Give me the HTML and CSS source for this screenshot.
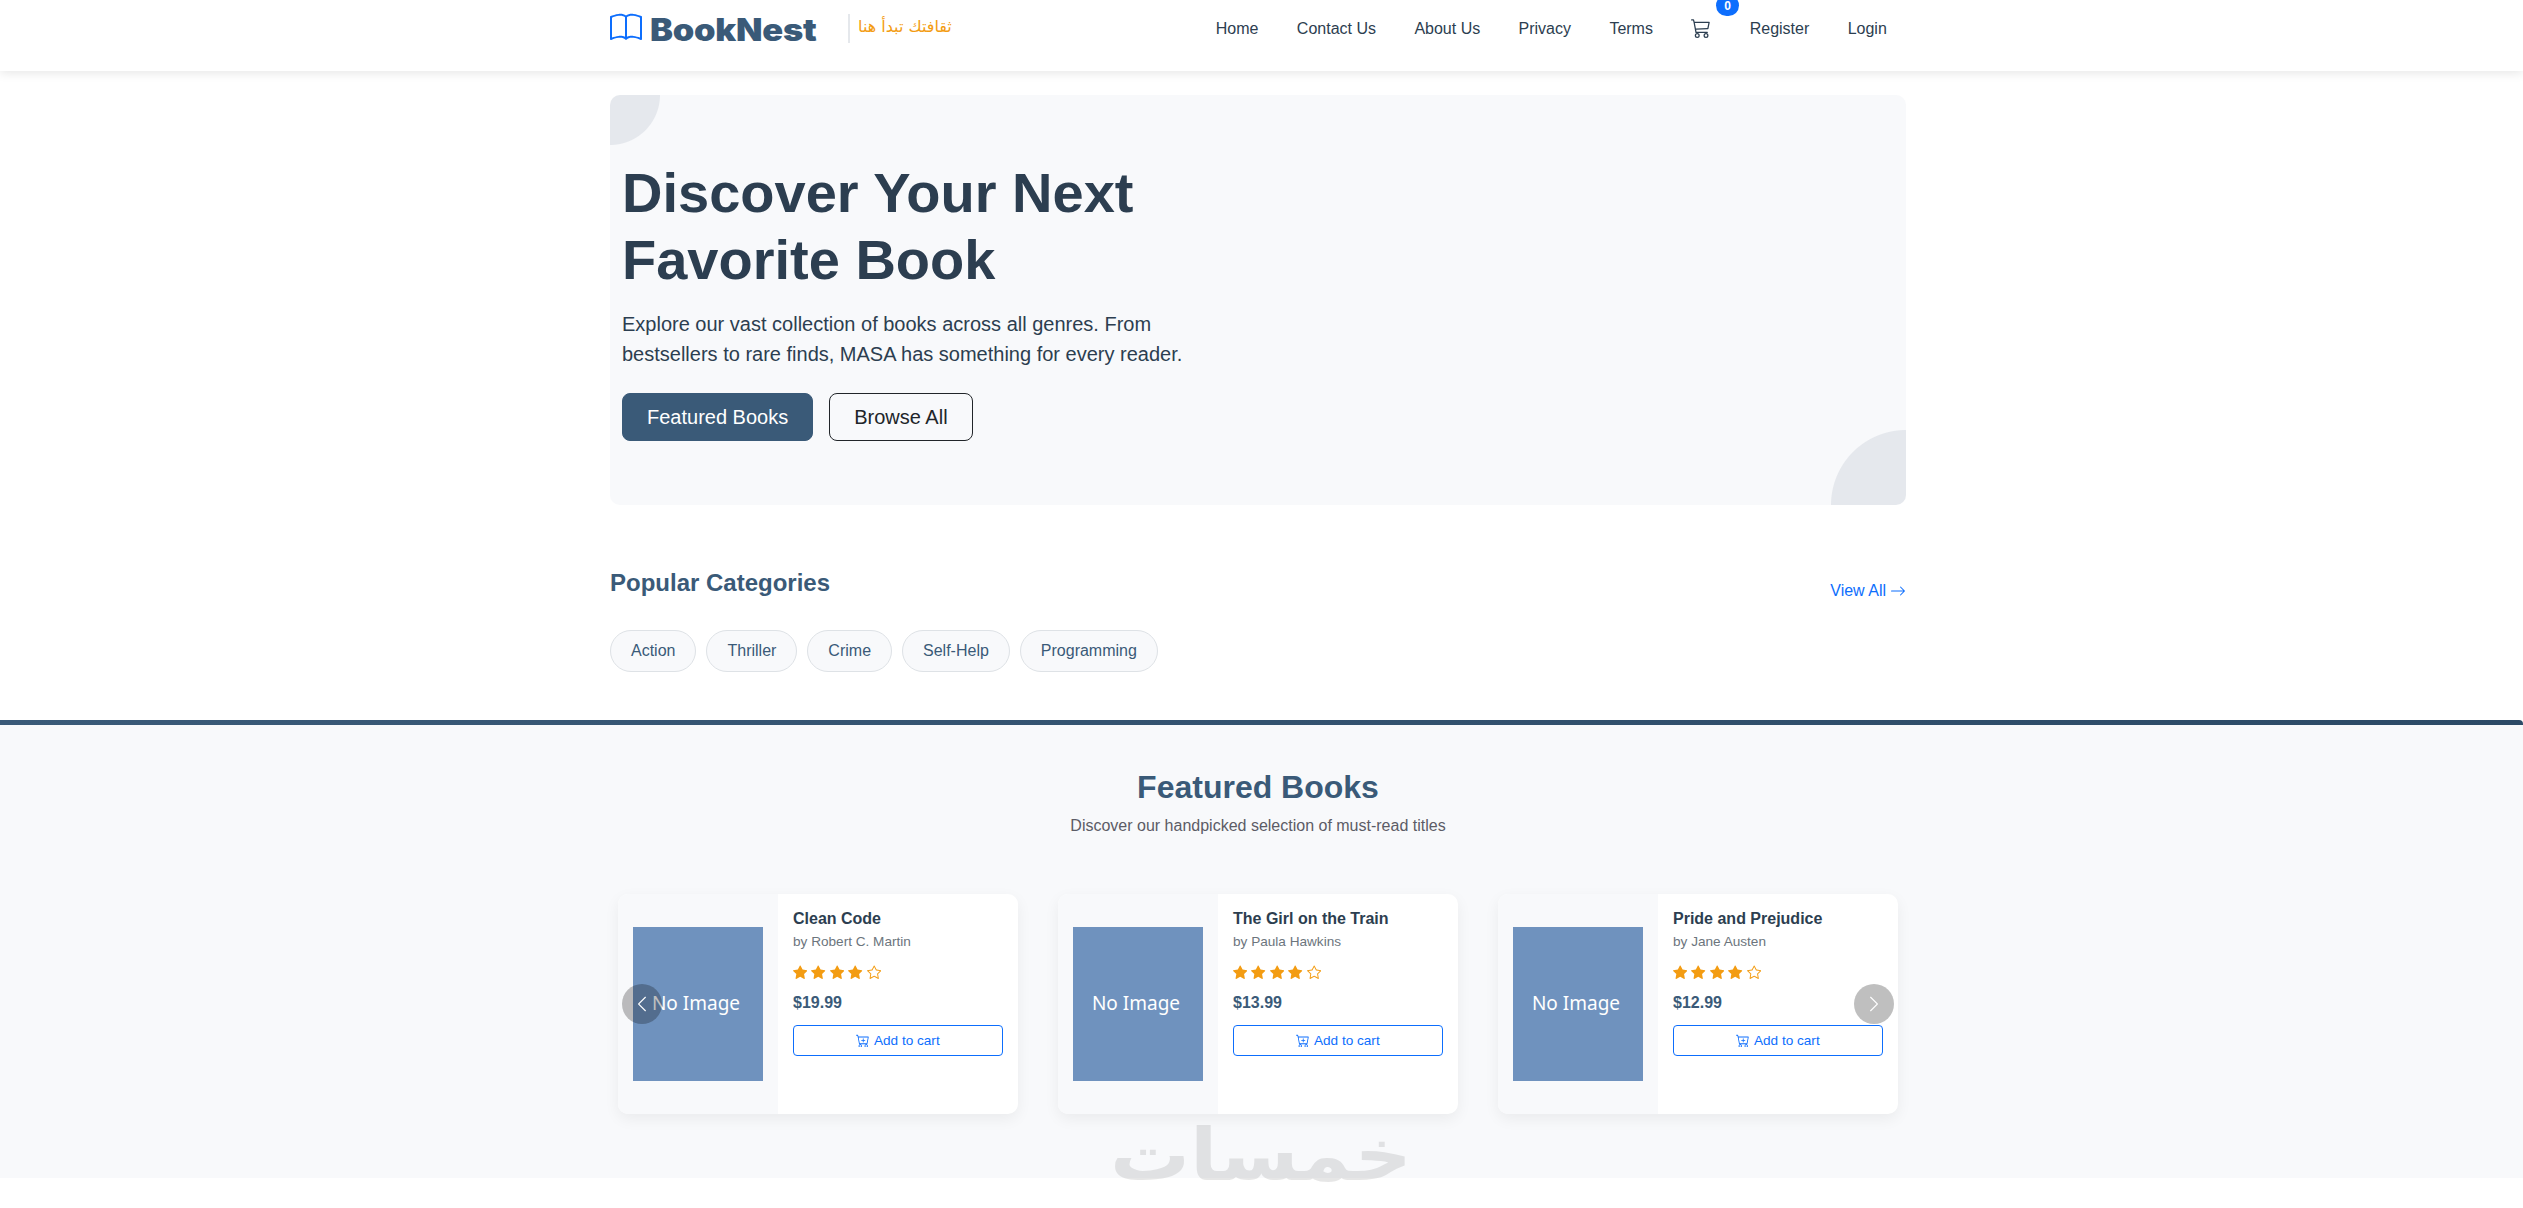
FILE: index.html
```html
<!DOCTYPE html>
<html lang="en">
<head>
<meta charset="utf-8">
<title>BookNest</title>
<link rel="stylesheet" href="styles.css">
</head>
<body>
<svg class="sprite" aria-hidden="true">
  <symbol id="book" viewBox="0 0 16 16"><path d="M1 2.828c.885-.37 2.154-.769 3.388-.893 1.33-.134 2.458.063 3.112.752v9.746c-.935-.53-2.12-.603-3.213-.493-1.18.12-2.37.461-3.287.811zm7.5-.141c.654-.689 1.782-.886 3.112-.752 1.234.124 2.503.523 3.388.893v9.923c-.918-.35-2.107-.692-3.287-.81-1.094-.111-2.278-.039-3.213.492zM8 1.783C7.015.936 5.587.81 4.287.94c-1.514.153-3.042.672-3.994 1.105A.5.5 0 0 0 0 2.5v11a.5.5 0 0 0 .707.455c.882-.4 2.303-.881 3.68-1.02 1.409-.142 2.59.087 3.223.877a.5.5 0 0 0 .78 0c.633-.79 1.814-1.019 3.222-.877 1.378.139 2.8.62 3.681 1.02A.5.5 0 0 0 16 13.5v-11a.5.5 0 0 0-.293-.455c-.952-.433-2.48-.952-3.994-1.105C10.413.809 8.985.936 8 1.783"/></symbol>
  <symbol id="cart" viewBox="0 0 16 16"><path d="M0 1.500a.5.5 0 0 1 .5-.5H2a.5.5 0 0 1 .485.379L2.890 3H14.500a.5.5 0 0 1 .49.598l-1 5a.5.5 0 0 1-.465.401l-9.397.472L4.415 11H13a.5.5 0 0 1 0 1H4a.5.5 0 0 1-.491-.408L2.010 3.607 1.610 2H.5a.5.5 0 0 1-.5-.5M3.102 4l.84 4.479 9.144-.459L13.890 4zM5 12a2 2 0 1 0 0 4 2 2 0 0 0 0-4m7 0a2 2 0 1 0 0 4 2 2 0 0 0 0-4m-7 1a1 1 0 1 1 0 2 1 1 0 0 1 0-2m7 0a1 1 0 1 1 0 2 1 1 0 0 1 0-2"/></symbol>
  <symbol id="cart-plus" viewBox="0 0 16 16"><path d="M9 5.500a.5.5 0 0 0-1 0V7H6.500a.5.5 0 0 0 0 1H8v1.500a.5.5 0 0 0 1 0V8h1.500a.5.5 0 0 0 0-1H9z"/><path d="M.5 1a.5.5 0 0 0 0 1h1.110l.401 1.607 1.498 7.985A.5.5 0 0 0 4 12h1a2 2 0 1 0 0 4 2 2 0 0 0 0-4h7a2 2 0 1 0 0 4 2 2 0 0 0 0-4h1a.5.5 0 0 0 .491-.408l1.500-8A.5.5 0 0 0 14.500 3H2.890l-.405-1.621A.5.5 0 0 0 2 1zm3.915 10L3.102 4h10.796l-1.313 7zM6 14a1 1 0 1 1-2 0 1 1 0 0 1 2 0m7 0a1 1 0 1 1-2 0 1 1 0 0 1 2 0"/></symbol>
  <symbol id="arrow" viewBox="0 0 16 16"><path fill-rule="evenodd" d="M1 8a.5.5 0 0 1 .5-.5h11.793l-3.147-3.146a.5.5 0 0 1 .708-.708l4 4a.5.5 0 0 1 0 .708l-4 4a.5.5 0 0 1-.708-.708L13.293 8.500H1.500A.5.5 0 0 1 1 8"/></symbol>
  <symbol id="star" viewBox="0 0 16 16"><path d="M3.612 15.443c-.386.198-.824-.149-.746-.592l.83-4.730L.173 6.765c-.329-.314-.158-.888.283-.95l4.898-.696L7.538.792c.197-.39.73-.39.927 0l2.184 4.327 4.898.696c.441.062.612.636.282.95l-3.522 3.356.83 4.730c.078.443-.36.790-.746.592L8 13.187l-4.389 2.256z"/></symbol>
  <symbol id="star-empty" viewBox="0 0 16 16"><path d="M2.866 14.850c-.078.444.36.791.746.593l4.390-2.256 4.389 2.256c.386.198.824-.149.746-.592l-.83-4.730 3.522-3.356c.33-.314.16-.888-.282-.95l-4.898-.696L8.465.792a.513.513 0 0 0-.927 0L5.354 5.120l-4.898.696c-.441.062-.612.636-.283.950l3.523 3.356-.83 4.730zm4.905-2.767-3.686 1.894.694-3.957a.56.56 0 0 0-.163-.505L1.710 6.745l4.052-.576a.53.53 0 0 0 .393-.288L8 2.223l1.847 3.658a.53.53 0 0 0 .393.288l4.052.575-2.906 2.770a.56.56 0 0 0-.163.506l.694 3.957-3.686-1.894a.5.5 0 0 0-.461 0z"/></symbol>
  <symbol id="chevron" viewBox="0 0 16 16"><path d="M4.646 1.646a.5.5 0 0 1 .708 0l6 6a.5.5 0 0 1 0 .708l-6 6a.5.5 0 0 1-.708-.708L10.293 8 4.646 2.354a.5.5 0 0 1 0-.708"/></symbol>
</svg>

<header class="header">
  <div class="container header-row">
    <a class="brand"><svg class="brand-icon"><use href="#book"/></svg><span class="brand-name">BookNest</span></a>
    <span class="tagline" lang="ar" dir="rtl">ثقافتك تبدأ هنا</span>
    <nav class="nav">
      <a>Home</a><a>Contact Us</a><a>About Us</a><a>Privacy</a><a>Terms</a>
      <a class="cart"><svg class="cart-icon"><use href="#cart"/></svg><span class="badge">0</span></a>
      <a>Register</a><a>Login</a>
    </nav>
  </div>
</header>

<main>
  <section class="container hero">
    <h1>Discover Your Next<br>Favorite Book</h1>
    <p>Explore our vast collection of books across all genres. From bestsellers to rare finds, MASA has something for every reader.</p>
    <div class="hero-actions"><a class="btn btn-solid">Featured Books</a><a class="btn btn-line">Browse All</a></div>
  </section>

  <section class="container categories">
    <div class="cat-head"><h2>Popular Categories</h2><a class="view-all">View All <svg><use href="#arrow"/></svg></a></div>
    <div class="pills"><a>Action</a><a>Thriller</a><a>Crime</a><a>Self-Help</a><a>Programming</a></div>
  </section>

  <section class="featured">
    <div class="container">
      <h2>Featured Books</h2>
      <p class="sub">Discover our handpicked selection of must-read titles</p>
      <div class="carousel">
        <article class="card">
          <div class="cover"><div class="no-image">No Image</div></div>
          <div class="info">
            <h3>Clean Code</h3><p class="author">by Robert C. Martin</p>
            <div class="stars"><svg><use href="#star"/></svg><svg><use href="#star"/></svg><svg><use href="#star"/></svg><svg><use href="#star"/></svg><svg><use href="#star-empty"/></svg></div>
            <p class="price">$19.99</p>
            <a class="add"><svg><use href="#cart-plus"/></svg>Add to cart</a>
          </div>
        </article>
        <article class="card">
          <div class="cover"><div class="no-image">No Image</div></div>
          <div class="info">
            <h3>The Girl on the Train</h3><p class="author">by Paula Hawkins</p>
            <div class="stars"><svg><use href="#star"/></svg><svg><use href="#star"/></svg><svg><use href="#star"/></svg><svg><use href="#star"/></svg><svg><use href="#star-empty"/></svg></div>
            <p class="price">$13.99</p>
            <a class="add"><svg><use href="#cart-plus"/></svg>Add to cart</a>
          </div>
        </article>
        <article class="card">
          <div class="cover"><div class="no-image">No Image</div></div>
          <div class="info">
            <h3>Pride and Prejudice</h3><p class="author">by Jane Austen</p>
            <div class="stars"><svg><use href="#star"/></svg><svg><use href="#star"/></svg><svg><use href="#star"/></svg><svg><use href="#star"/></svg><svg><use href="#star-empty"/></svg></div>
            <p class="price">$12.99</p>
            <a class="add"><svg><use href="#cart-plus"/></svg>Add to cart</a>
          </div>
        </article>
        <button class="arrow prev" aria-label="Previous"><svg><use href="#chevron"/></svg></button>
        <button class="arrow next" aria-label="Next"><svg><use href="#chevron"/></svg></button>
      </div>
    </div>
  </section>
</main>
<svg class="watermark" viewBox="0 0 302 84"><text x="151" y="60" text-anchor="middle" textLength="302" lengthAdjust="spacingAndGlyphs" direction="rtl">خمسات</text></svg>
</body>
</html>
```
FILE: styles.css
```css
* { box-sizing: border-box; }
body {
  margin: 0;
  height: 1208px;
  overflow: hidden;
  position: relative;
  background: #fff;
  color: #2c3e50;
  font: 16px/24px "Liberation Sans", Arial, sans-serif;
}
h1, h2, h3, p { margin: 0; }
svg { fill: currentColor; flex: none; }
.sprite { position: absolute; width: 0; height: 0; }
.container { width: 1296px; margin-left: 610px; }

.header { height: 71px; background: #fff; box-shadow: 0 2px 10px rgba(0, 0, 0, .1); }
.header-row { display: flex; align-items: flex-start; }
.brand { display: flex; width: 238px; padding-top: 12px; color: #3a5a78; }
.brand-icon { width: 32px; height: 32px; margin-right: 8px; color: #0d6efd; }
.brand-name { font: 900 31px/36px Inter, sans-serif; letter-spacing: -.2px; transform: scaleX(1.11); transform-origin: 0 0; }
.tagline {
  height: 29px;
  margin-top: 14px;
  padding-left: 8px;
  border-left: 2px solid #e5e8ec;
  color: #f39c12;
  font: 16px/26px "DejaVu Sans", sans-serif;
}
.nav { display: flex; margin-left: auto; padding-top: 17px; }
.nav a { padding: 0 19.2px; }
.cart { position: relative; display: flex; }
.cart-icon { width: 20px; height: 20px; margin-top: 1px; }
.badge {
  position: absolute;
  left: 44px;
  top: -22px;
  width: 23px;
  height: 21px;
  border-radius: 11px;
  background: #0d6efd;
  color: #fff;
  font: bold 12px/22px "Liberation Sans", Arial, sans-serif;
  text-align: center;
}

.hero {
  height: 410px;
  margin-top: 24px;
  padding: 64px 12px;
  border-radius: 10px;
  background:
    radial-gradient(circle at 0 0, #e5e8ed 49.5px, transparent 50.5px),
    radial-gradient(circle at 100% 100%, #e5e8ed 74.5px, transparent 75.5px),
    #f8f9fb;
}
.hero h1 { font-size: 56px; line-height: 67.2px; }
.hero p { width: 600px; margin: 16px 0 24px; font-size: 20px; line-height: 30px; }
.hero-actions { display: flex; gap: 16px; }
.btn { padding: 8px 24px; border: 1px solid; border-radius: 8px; font-size: 20px; line-height: 30px; }
.btn-solid { background: #3a5a78; border-color: #3a5a78; color: #fff; }
.btn-line { border-color: #212529; color: #212529; }

.categories { height: 215px; padding-top: 64px; }
.cat-head { display: flex; justify-content: space-between; height: 33px; }
.cat-head h2 { color: #3a5a78; font-size: 24px; line-height: 28.8px; }
.view-all { display: flex; align-items: center; gap: 4px; height: 24px; margin-top: 10px; color: #0d6efd; }
.view-all svg { width: 16px; height: 16px; }
.pills { display: flex; gap: 10px; margin-top: 28px; }
.pills a { padding: 8px 20px; border: 1px solid #dee2e6; border-radius: 21px; background: #f8f9fb; color: #3a5a78; }

.featured {
  height: 458px;
  padding-top: 45px;
  background: linear-gradient(90deg, #3a5a78, #2c4a66) 0 0 / 100% 5px no-repeat #f8f9fb;
  border-radius: 0 4px 0 0;
}
.featured h2 { color: #3a5a78; font-size: 32px; line-height: 44px; text-align: center; }
.sub { margin-top: 5px; color: #5c5c66; text-align: center; }
.carousel { display: flex; gap: 40px; position: relative; margin-top: 56px; padding: 0 8px; }
.card { display: flex; width: 400px; height: 220px; border-radius: 10px; background: #fff; box-shadow: 0 5px 15px rgba(0, 0, 0, .06); overflow: hidden; }
.cover { display: grid; place-items: center; width: 160px; background: #f8f9fb; }
.no-image { width: 130px; height: 154px; padding-right: 4px; background: #6f92be; color: #fff; font: 19px/152px "Noto Sans", sans-serif; text-align: center; }
.info { flex: 1; padding: 15px; }
.info h3 { font-size: 16px; line-height: 20px; }
.author { margin-top: 2px; color: #6c757d; font-size: 13.6px; line-height: 22px; }
.stars { display: flex; gap: 4px; height: 14.4px; margin-top: 12px; color: #f39c12; }
.stars svg { width: 14.4px; height: 14.4px; }
.price { margin-top: 11.6px; color: #3a5a78; font-weight: bold; }
.add { display: flex; justify-content: center; align-items: center; gap: 4px; height: 31px; margin-top: 10px; border: 1px solid #0d6efd; border-radius: 4px; color: #0d6efd; font-size: 13.6px; line-height: 21px; }
.add svg { width: 13.6px; height: 13.6px; }
.arrow {
  position: absolute;
  top: 90px;
  display: grid;
  place-items: center;
  width: 40px;
  height: 40px;
  padding: 0;
  border: 0;
  border-radius: 50%;
  background: rgba(0, 0, 0, .25);
  color: #fff;
}
.arrow svg { width: 18px; height: 18px; }
.prev { left: 12px; }
.prev svg { transform: scaleX(-1); }
.next { right: 12px; }

.watermark { position: absolute; left: 1110px; top: 1120px; width: 302px; height: 84px; overflow: visible; fill: #3c3c3c; opacity: .12; font: bold 72px "DejaVu Sans", sans-serif; }
```
